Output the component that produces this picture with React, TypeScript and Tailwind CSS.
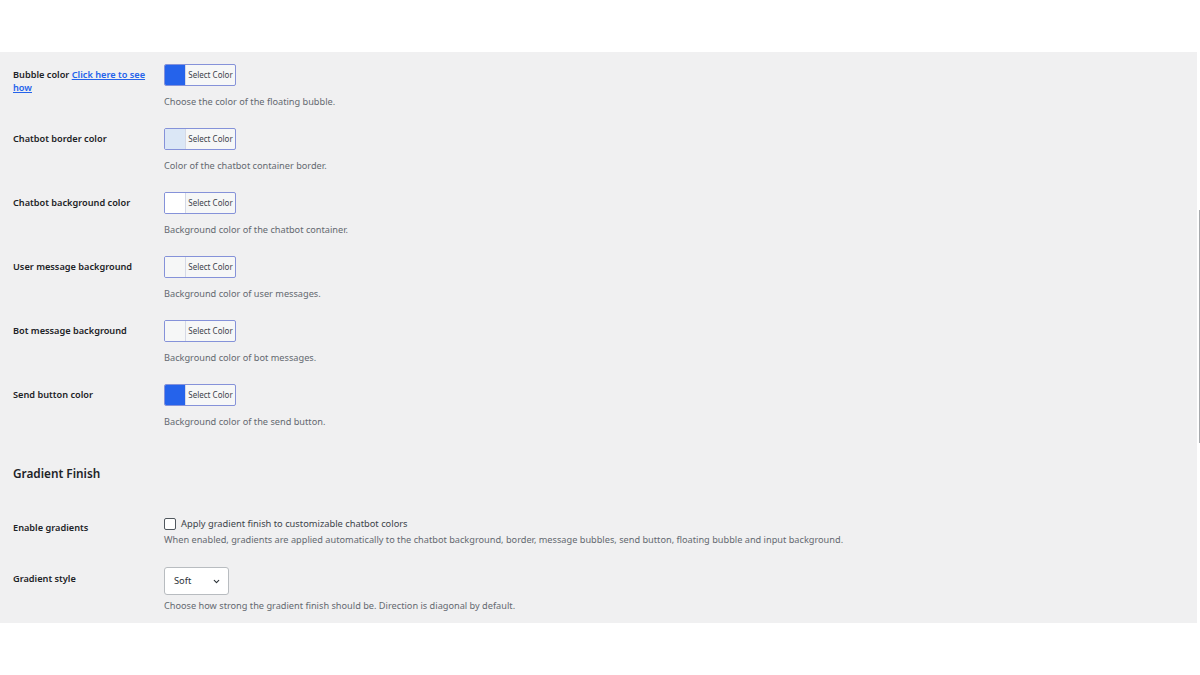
import React from 'react'

type ColorRow = { label: React.ReactNode; swatch: string; desc: string }

const rows: ColorRow[] = [
  {
    label: (
      <>
        Bubble color{' '}
        <a href="#" className="text-[#2563eb] underline">
          Click here to see how
        </a>
      </>
    ),
    swatch: 'bg-[#2563eb]',
    desc: 'Choose the color of the floating bubble.',
  },
  { label: 'Chatbot border color', swatch: 'bg-[#dbe7f6]', desc: 'Color of the chatbot container border.' },
  { label: 'Chatbot background color', swatch: 'bg-white', desc: 'Background color of the chatbot container.' },
  { label: 'User message background', swatch: 'bg-[#f6f7f7]', desc: 'Background color of user messages.' },
  { label: 'Bot message background', swatch: 'bg-[#f6f7f7]', desc: 'Background color of bot messages.' },
  { label: 'Send button color', swatch: 'bg-[#2563eb]', desc: 'Background color of the send button.' },
]

function ColorButton({ swatch }: { swatch: string }) {
  return (
    <button className="flex h-[22px] w-[72px] overflow-hidden rounded-[2px] border border-[#8592d9] bg-[#f6f7f7]">
      <span className={`h-full w-[21px] border-r border-[#d5d9e6] ${swatch}`} />
      <span className="flex flex-1 items-center justify-center text-[8px] text-[#3c434a]">Select Color</span>
    </button>
  )
}

function Label({ children }: { children: React.ReactNode }) {
  return <div className="w-[151px] shrink-0 pr-[10px] text-[9.2px] font-semibold leading-[13px] text-[#1d2327]">{children}</div>
}

export default function App() {
  return (
    <div className="flex h-[675px] w-[1200px] flex-col bg-white font-['Noto_Sans',sans-serif]">
      <div className="h-[52px]" />
      <div className="flex">
        <div className="flex-1 bg-[#f0f0f1] pl-[13px] pt-[12px] pb-[11px]">
          {rows.map((r, i) => (
            <div key={i} className="flex h-[64px]">
              <div className="pt-[4px]">
                <Label>{r.label}</Label>
              </div>
              <div className="flex flex-col">
                <ColorButton swatch={r.swatch} />
                <p className="mt-[9px] text-[9.2px] leading-[13px] text-[#646970]">{r.desc}</p>
              </div>
            </div>
          ))}

          <h2 className="mt-[17px] text-[11.8px] font-semibold leading-[16px] text-[#1d2327]">Gradient Finish</h2>

          <div className="mt-[36px] flex">
            <div className="pt-[4px]">
              <Label>Enable gradients</Label>
            </div>
            <div className="flex flex-col">
              <label className="flex items-center gap-[5px] text-[9.3px] leading-[13px] text-[#3c434a]">
                <span className="h-[12px] w-[12px] rounded-[2px] border border-[#50575e] bg-white" />
                Apply gradient finish to customizable chatbot colors
              </label>
              <p className="mt-[3px] text-[9.2px] leading-[13px] text-[#646970]">
                When enabled, gradients are applied automatically to the chatbot background, border, message bubbles, send button, floating bubble and input background.
              </p>
            </div>
          </div>

          <div className="mt-[21px] flex">
            <div className="pt-[5px]">
              <Label>Gradient style</Label>
            </div>
            <div className="flex flex-col">
              <div className="flex h-[28px] w-[65px] items-center justify-between rounded-[3px] border border-[#b8bcc0] bg-white pl-[9px] pr-[7px] text-[9.3px] text-[#2c3338]">
                <span>Soft</span>
                <svg width="9" height="9" viewBox="0 0 24 24" fill="none" stroke="#2c3338" strokeWidth="3" strokeLinecap="round" strokeLinejoin="round">
                  <path d="M6 9l6 6 6-6" />
                </svg>
              </div>
              <p className="mt-[4px] text-[9.2px] leading-[13px] text-[#646970]">
                Choose how strong the gradient finish should be. Direction is diagonal by default.
              </p>
            </div>
          </div>
        </div>
        <div className="flex w-[3px] flex-col bg-white">
          <div className="h-[158px]" />
          <div className="ml-[2px] h-[233px] w-px bg-[#a7aaad]" />
        </div>
      </div>
    </div>
  )
}
